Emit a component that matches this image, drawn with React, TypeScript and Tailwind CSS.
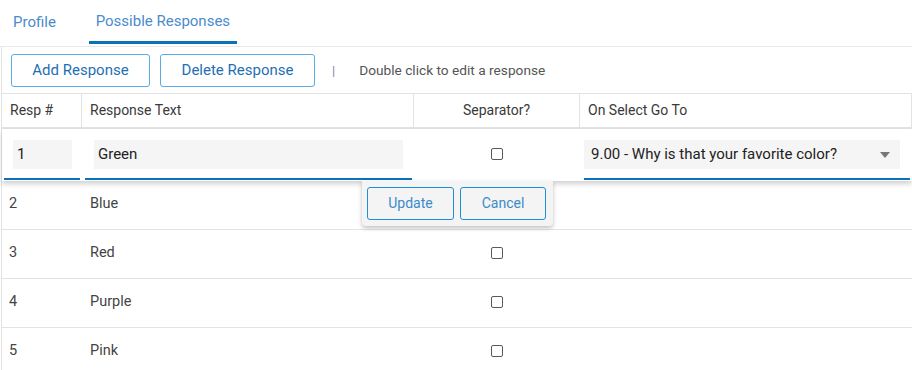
export default function App() {
  const rows = [
    { n: 2, text: "Blue" },
    { n: 3, text: "Red" },
    { n: 4, text: "Purple" },
    { n: 5, text: "Pink" },
  ];

  return (
    <div className="w-[912px] h-[370px] overflow-hidden bg-white font-['Roboto',sans-serif] text-[#333] relative">
      {/* Tabs */}
      <div className="flex h-[47px] border-b border-[#e8e8e8]">
        <div className="flex items-center h-[44px] pl-[13px] pr-[33px] pt-[1px] text-[15px] text-[#4a8ccb]">Profile</div>
        <div className="flex items-center justify-center w-[148px] h-[44px] pt-[1px] text-[15px] text-[#4a8ccb] border-b-[3px] border-[#0a72b9]">
          Possible Responses
        </div>
      </div>

      <div className="border-l border-[#e3e3e3] w-[911px] ml-[1px]">
        {/* Toolbar */}
        <div className="flex items-center h-[46px] pl-[9px] pt-[1px] gap-[10px]">
          <button className="h-[33px] w-[139px] rounded-[3px] border border-[#56aee5] text-[15px] text-[#1f6fb4] bg-white">
            Add Response
          </button>
          <button className="h-[33px] w-[155px] rounded-[3px] border border-[#56aee5] text-[15px] text-[#1f6fb4] bg-white">
            Delete Response
          </button>
          <span className="ml-[7px] text-[13px] text-[#8a7fa8]">|</span>
          <span className="ml-[14px] text-[13.7px] text-[#555]">Double click to edit a response</span>
        </div>

        {/* Table header */}
        <div className="flex h-[36px] border-t border-b-2 border-r border-[#e3e3e3] text-[14px] text-[#3a3a3a]">
          <div className="w-[80px] flex items-center pl-[8px] border-r border-[#e3e3e3]">Resp #</div>
          <div className="w-[332px] flex items-center pl-[8px] border-r border-[#e3e3e3]">Response Text</div>
          <div className="w-[166px] flex items-center justify-center border-r border-[#e3e3e3]">Separator?</div>
          <div className="flex-1 flex items-center pl-[8px]">On Select Go To</div>
        </div>

        {/* Edit row */}
        <div className="relative z-10 flex h-[52px] bg-white shadow-[0_3px_5px_rgba(0,0,0,0.18)]">
          <div className="w-[80px] pl-[2px] pr-[2px] pt-[11px]">
            <div className="h-[40px] border-b-2 border-[#0a72b9] pl-[9px] pr-[8px]">
              <div className="h-[29px] bg-[#f5f5f5] flex items-center pl-[4px] text-[15px] text-[#222]">1</div>
            </div>
          </div>
          <div className="w-[332px] pl-[3px] pr-[2px] pt-[11px]">
            <div className="h-[40px] border-b-2 border-[#0a72b9] pl-[9px] pr-[9px]">
              <div className="h-[29px] bg-[#f5f5f5] flex items-center pl-[4px] text-[15px] text-[#222]">Green</div>
            </div>
          </div>
          <div className="w-[166px] flex items-center justify-center pb-[2px]">
            <div className="w-[12px] h-[12px] border border-[#5a5a5a] rounded-[2px]" />
          </div>
          <div className="flex-1 pl-[4px] pr-[2px] pt-[11px]">
            <div className="h-[40px] border-b-2 border-[#0a72b9] pr-[10px]">
              <div className="h-[29px] bg-[#f5f5f5] flex items-center justify-between pl-[7px] pr-[10px] text-[15px] text-[#222]">
                <span>9.00 - Why is that your favorite color?</span>
                <svg width="10" height="6" viewBox="0 0 10 6">
                  <path d="M0 0 H10 L5 6 Z" fill="#777" />
                </svg>
              </div>
            </div>
          </div>
        </div>

        {/* Body rows */}
        {rows.map((r, i) => (
          <div
            key={r.n}
            className={`flex border-t border-[#e3e3e3] text-[14.5px] text-[#444] pb-[2px] ${i === 0 ? "h-[48px] border-t-0" : "h-[49px]"}`}
          >
            <div className="w-[80px] flex items-center pl-[7px]">{r.n}</div>
            <div className="w-[332px] flex items-center pl-[8px]">{r.text}</div>
            <div className="w-[166px] flex items-center justify-center">
              <div className="w-[12px] h-[12px] border border-[#5a5a5a] rounded-[2px]" />
            </div>
            <div className="flex-1" />
          </div>
        ))}
      </div>

      {/* Update / Cancel popover */}
      <div className="absolute left-[362px] top-[181px] z-20 w-[191px] h-[45px] bg-[#f4f4f4] rounded-b-[4px] shadow-[0_2px_4px_rgba(0,0,0,0.25)] flex items-start gap-[6px] pl-[5px] pt-[6px]">
        <button className="h-[33px] w-[87px] rounded-[3px] border border-[#1c8fd8] text-[14px] text-[#3b8bcc] bg-[#f4f4f4]">
          Update
        </button>
        <button className="h-[33px] w-[86px] rounded-[3px] border border-[#1c8fd8] text-[14px] text-[#3b8bcc] bg-[#f4f4f4]">
          Cancel
        </button>
      </div>
    </div>
  );
}
